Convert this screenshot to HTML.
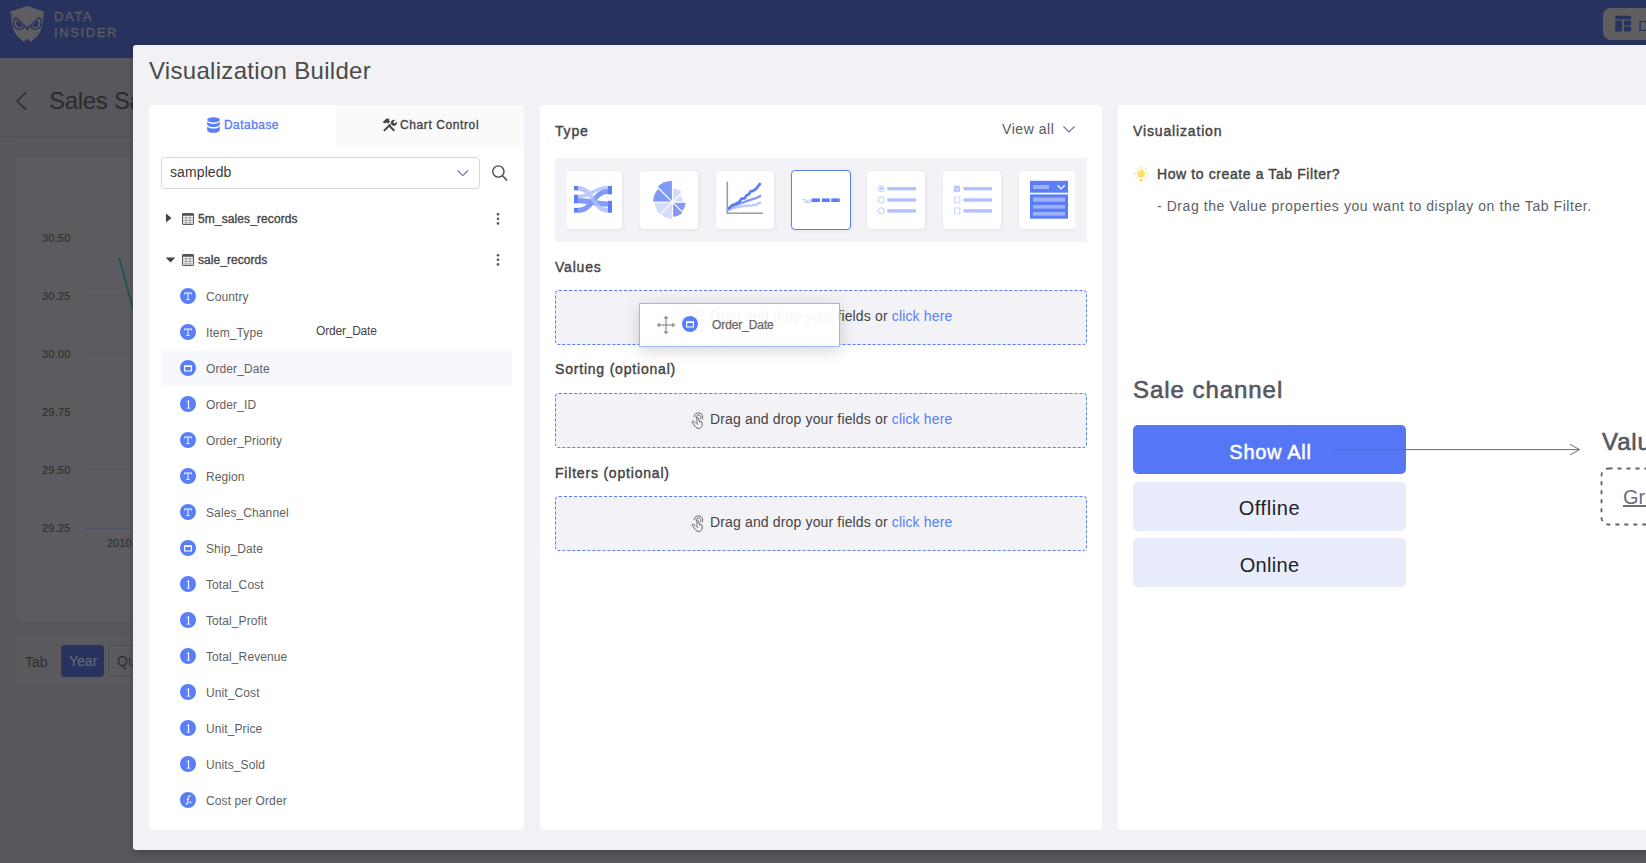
<!DOCTYPE html>
<html><head><meta charset="utf-8">
<style>
*{box-sizing:border-box;margin:0;padding:0}
html,body{width:1646px;height:863px;overflow:hidden;background:#57575c;font-family:"Liberation Sans",sans-serif;position:relative}
.a{position:absolute}
.t{position:absolute;white-space:nowrap;line-height:1}
/* background page */
#nav{left:0;top:0;width:1646px;height:58px;background:#27325e}
#hdr{left:0;top:58px;width:1646px;height:80px;background:#57575c;border-bottom:2px solid #525257}
#chart{left:17px;top:157px;width:200px;height:464px;background:#5c5c60}
#tabc{left:17px;top:637px;width:200px;height:48px;background:#5a5a5e}
/* modal */
#modal{left:133px;top:45px;width:1520px;height:805px;background:#f2f2f6;border-radius:3px;box-shadow:0 2px 6px rgba(0,0,0,.25)}
.panel{position:absolute;background:#fff;border-radius:4px}
#lp{left:149px;top:105px;width:375px;height:725px}
#mp{left:540px;top:105px;width:562px;height:725px}
#rp{left:1118px;top:105px;width:600px;height:725px}
.fld{left:206px;font-size:12px;color:#5f5f5f;letter-spacing:0.1px}
.sec{left:555px;font-size:14px;font-weight:400;color:#444;letter-spacing:0.8px;-webkit-text-stroke:0.4px #444}
.dz{left:555px;width:532px;height:55px;border:1px dashed #5a7ef6;border-radius:4px;background:#f2f2f7}
.dzt{left:710px;font-size:14px;color:#444;letter-spacing:0.15px}
.card{position:absolute;top:13px;width:58px;height:58px;background:#fff;border-radius:4px;box-shadow:1px 1px 4px rgba(0,0,40,.07)}
.card.sel{top:12px;width:60px;height:60px;border:1.5px solid #5a7ef6}
.lbl{left:42px;font-size:11px;color:#2a2a2e;letter-spacing:0.2px}
</style></head><body>
<div id="nav" class="a"></div>
<div id="hdr" class="a"></div>
<div class="a" style="left:17px;top:138px;width:200px;height:3px;background:#5a5a5e"></div>
<div id="chart" class="a"></div>
<div id="tabc" class="a"></div>

<svg class="a" style="left:5px;top:2px" width="45" height="45" viewBox="0 0 45 45"><path d="M22.4 4L39.4 9.8L38.4 11.8C38.4 22 36.5 30 31.5 35L25.5 40L22.4 36.5L19 40L13 35C8 30 6.3 22 6.3 11.8L4.4 9.8Z" fill="#5d5d62"/>
<g><path d="M8.3 17.2L10.8 14.8L20.2 23.2C19.6 26.6 17.2 27.8 14.2 27.8C10.6 27.8 8 25.2 8 21.6C8 20 8.1 18.5 8.3 17.2Z" fill="#27325e"/><path d="M9.6 18L11 16.6L18.6 23.5C18 25.6 16.3 26.4 14.2 26.4C11.5 26.4 9.4 24.3 9.4 21.6C9.4 20.3 9.5 19.1 9.6 18Z" fill="#5d5d62"/><path d="M12 18.3L17.6 23.2C17.1 24.4 16 25 14.6 25C12.7 25 11.4 23.5 11.4 21.6C11.4 20.3 11.6 19.2 12 18.3Z" fill="#27325e"/></g>
<g transform="translate(44.8 0) scale(-1 1)"><path d="M8.3 17.2L10.8 14.8L20.2 23.2C19.6 26.6 17.2 27.8 14.2 27.8C10.6 27.8 8 25.2 8 21.6C8 20 8.1 18.5 8.3 17.2Z" fill="#27325e"/><path d="M9.6 18L11 16.6L18.6 23.5C18 25.6 16.3 26.4 14.2 26.4C11.5 26.4 9.4 24.3 9.4 21.6C9.4 20.3 9.5 19.1 9.6 18Z" fill="#5d5d62"/><path d="M12 18.3L17.6 23.2C17.1 24.4 16 25 14.6 25C12.7 25 11.4 23.5 11.4 21.6C11.4 20.3 11.6 19.2 12 18.3Z" fill="#27325e"/></g><path d="M19.6 23.2L22.4 29L25.2 23.2L22.4 25.2Z" fill="#27325e"/></svg>
<div class="t" style="left:54px;top:10px;font-size:13px;color:#5d5d62;letter-spacing:1.6px;-webkit-text-stroke:0.3px #5d5d62">DATA</div>
<div class="t" style="left:54px;top:26px;font-size:13px;color:#5d5d62;letter-spacing:1.6px;-webkit-text-stroke:0.3px #5d5d62">INSIDER</div>
<div class="a" style="left:1603px;top:8px;width:80px;height:32px;background:#5e5e60;border-radius:8px"></div>
<svg class="a" style="left:1615px;top:15px" width="17" height="17" viewBox="0 0 17 17"><g fill="#27325e"><rect x="0.2" y="0.8" width="16" height="3.6" rx="1.6"/><rect x="0.2" y="5.4" width="6.9" height="11.2" rx="1.4"/><rect x="8.9" y="5.4" width="7.3" height="5" rx="1.4"/><rect x="8.9" y="11.5" width="7.3" height="5.1" rx="1.4"/></g></svg>
<div class="t" style="left:1638px;top:18px;font-size:15px;color:#27325e">D</div>
<svg class="a" style="left:14px;top:91px" width="14" height="20" viewBox="0 0 14 20"><path d="M12 1.5L3 10l9 8.5" stroke="#2a2a2e" stroke-width="1.5" fill="none"/></svg>
<div class="t" style="left:49px;top:89px;font-size:24px;color:#2a2a2e;letter-spacing:-0.3px">Sales Sales</div>
<div class="t lbl" style="top:233px">30.50</div>
<div class="t lbl" style="top:291px">30.25</div>
<div class="t lbl" style="top:349px">30.00</div>
<div class="t lbl" style="top:407px">29.75</div>
<div class="t lbl" style="top:465px">29.50</div>
<div class="t lbl" style="top:523px">29.25</div>
<div class="a" style="left:85px;top:236px;width:60px;height:1px;background:#58585c"></div>
<div class="a" style="left:85px;top:295px;width:60px;height:1px;background:#58585c"></div>
<div class="a" style="left:85px;top:353px;width:60px;height:1px;background:#58585c"></div>
<div class="a" style="left:85px;top:411px;width:60px;height:1px;background:#58585c"></div>
<div class="a" style="left:85px;top:469px;width:60px;height:1px;background:#58585c"></div>
<div class="a" style="left:85px;top:528px;width:60px;height:1px;background:#4f5368"></div>
<div class="t" style="left:107px;top:538px;font-size:11px;color:#2a2a2e">2010</div>
<svg class="a" style="left:115px;top:255px" width="20" height="55" viewBox="0 0 20 55"><path d="M4.3 3L17.5 52" stroke="#1d5456" stroke-width="1.8"/></svg>
<div class="t" style="left:25px;top:655px;font-size:14px;color:#2e2e32">Tab</div>
<div class="a" style="left:61px;top:645px;width:43px;height:32px;background:#28325f;border-radius:4px"></div>
<div class="t" style="left:69px;top:654px;font-size:14px;color:#6c6d75">Year</div>
<div class="a" style="left:108px;top:645px;width:60px;height:32px;border:1px solid #4f4f54;border-radius:4px"></div>
<div class="t" style="left:117px;top:654px;font-size:14px;color:#2e2e32">Qu</div>
<div id="modal" class="a"></div>
<div id="lp" class="panel"></div>
<div id="mp" class="panel"></div>
<div id="rp" class="panel"></div>
<div class="t" style="left:149px;top:59px;font-size:24px;color:#4a4a4a;letter-spacing:0.3px">Visualization Builder</div>

<!-- tabs -->
<div class="a" style="left:336px;top:105px;width:188px;height:40px;background:#fafafa;border-top-right-radius:4px"></div>
<svg class="a" style="left:207px;top:117px" width="13" height="16" viewBox="0 0 13 16"><g fill="#5a7ef6"><ellipse cx="6.5" cy="2.8" rx="6.3" ry="2.6"/><path d="M0.2 4.6c0.8 1.4 3.3 2.3 6.3 2.3s5.5-0.9 6.3-2.3v3.2c-0.8 1.4-3.3 2.3-6.3 2.3s-5.5-0.9-6.3-2.3z"/><path d="M0.2 9.3c0.8 1.4 3.3 2.3 6.3 2.3s5.5-0.9 6.3-2.3v3.6c0 1.6-2.8 2.9-6.3 2.9s-6.3-1.3-6.3-2.9z"/></g></svg>
<div class="t" style="left:224px;top:119px;font-size:12px;color:#5a7ef6;letter-spacing:0.45px;-webkit-text-stroke:0.35px #5a7ef6">Database</div>
<svg class="a" style="left:382px;top:118px" width="15" height="14" viewBox="0 0 15 14"><g fill="#444"><path d="M1.2 12.2l6.6-6.6l1.4 1.4l-6.6 6.6z"/><path d="M6.6 8.4l1.4-1.4l5 5l-1.4 1.4z"/><path d="M0.6 4.2l3.6-3.4c1.2-0.5 2.6-0.4 3.6 0.3l-1.2 0.8l1.6 1.6l-2.2 2.2l-1.4-1.4l-1.2 1.2z"/><path d="M9.2 6.2c-0.6-1.1-0.4-2.6 0.6-3.6c1-1 2.3-1.2 3.4-0.7l-1.9 1.9l0.4 1.2l1.2 0.4l1.9-1.9c0.5 1.1 0.3 2.5-0.7 3.4c-1 1-2.5 1.2-3.6 0.6z"/></g></svg>
<div class="t" style="left:400px;top:119px;font-size:12px;color:#444;letter-spacing:0.6px;-webkit-text-stroke:0.35px #444">Chart Control</div>
<!-- select -->
<div class="a" style="left:161px;top:157px;width:319px;height:32px;border:1px solid #d9d9d9;border-radius:4px;background:#fff"></div>
<div class="t" style="left:170px;top:165px;font-size:14px;color:#3a3a3a;letter-spacing:0.1px">sampledb</div>
<svg class="a" style="left:456px;top:168px" width="14" height="10" viewBox="0 0 14 10"><path d="M1.6 2.5L6.8 7.6L12 2.5" stroke="#6b6d96" stroke-width="1.1" fill="none"/></svg>
<svg class="a" style="left:491px;top:165px" width="18" height="17" viewBox="0 0 18 17"><circle cx="7.4" cy="6.5" r="5.6" stroke="#454a50" stroke-width="1.4" fill="none"/><path d="M11.6 10.7L16 15.4" stroke="#454a50" stroke-width="1.5"/></svg>
<!-- tree -->
<svg class="a" style="left:165px;top:213px" width="8" height="10" viewBox="0 0 8 10"><path d="M1 0.5l5.5 4.5l-5.5 4.5z" fill="#444"/></svg>
<svg class="a" style="left:182px;top:213px" width="12" height="12" viewBox="0 0 12 12"><rect x="0.5" y="0.5" width="11" height="11" rx="0.6" fill="none" stroke="#555" stroke-width="1"/><rect x="0.5" y="0.5" width="11" height="2.3" fill="#555"/><path d="M0.5 4.9h11M0.5 7.4h11M0.5 9.9h11M4.1 2.5v9M7.9 2.5v9" stroke="#888" stroke-width="0.8"/></svg>
<div class="t" style="left:198px;top:213px;font-size:12px;color:#444;letter-spacing:0.1px;-webkit-text-stroke:0.35px #444">5m_sales_records</div>
<svg class="a" style="left:495px;top:212px" width="6" height="14" viewBox="0 0 6 14"><g fill="#555"><circle cx="3" cy="2.2" r="1.3"/><circle cx="3" cy="6.8" r="1.3"/><circle cx="3" cy="11.4" r="1.3"/></g></svg>
<svg class="a" style="left:165px;top:256px" width="11" height="8" viewBox="0 0 11 8"><path d="M0.8 1.5h9.4l-4.7 5z" fill="#444"/></svg>
<svg class="a" style="left:182px;top:254px" width="12" height="12" viewBox="0 0 12 12"><rect x="0.5" y="0.5" width="11" height="11" rx="0.6" fill="none" stroke="#555" stroke-width="1"/><rect x="0.5" y="0.5" width="11" height="2.3" fill="#555"/><path d="M0.5 4.9h11M0.5 7.4h11M0.5 9.9h11M4.1 2.5v9M7.9 2.5v9" stroke="#888" stroke-width="0.8"/></svg>
<div class="t" style="left:198px;top:254px;font-size:12px;color:#444;letter-spacing:0.05px;-webkit-text-stroke:0.35px #444">sale_records</div>
<svg class="a" style="left:495px;top:253px" width="6" height="14" viewBox="0 0 6 14"><g fill="#555"><circle cx="3" cy="2.2" r="1.3"/><circle cx="3" cy="6.8" r="1.3"/><circle cx="3" cy="11.4" r="1.3"/></g></svg>
<!-- highlighted row -->
<div class="a" style="left:161px;top:351px;width:351px;height:35px;background:#f7f8fd;border-radius:3px"></div>
<div class="t" style="left:316px;top:325px;font-size:12px;color:#444;letter-spacing:-0.2px">Order_Date</div>
<svg class="a" style="left:180px;top:288px" width="16" height="16"><circle cx="8" cy="8" r="8" fill="#5a7ef6"/><path d="M4.2 4.5h7.6v2h-0.8v-1h-2.5v5.7h1.2v0.8h-3.4v-0.8h1.2v-5.7h-2.5v1h-0.8z" fill="#fff"/></svg><div class="t fld" style="top:291px">Country</div>
<svg class="a" style="left:180px;top:324px" width="16" height="16"><circle cx="8" cy="8" r="8" fill="#5a7ef6"/><path d="M4.2 4.5h7.6v2h-0.8v-1h-2.5v5.7h1.2v0.8h-3.4v-0.8h1.2v-5.7h-2.5v1h-0.8z" fill="#fff"/></svg><div class="t fld" style="top:327px">Item_Type</div>
<svg class="a" style="left:180px;top:360px" width="16" height="16"><circle cx="8" cy="8" r="8" fill="#5a7ef6"/><path d="M4 5.3h8v6.3h-8z M5.2 7.1v3.3h5.6v-3.3z" fill="#fff" fill-rule="evenodd"/></svg><div class="t fld" style="top:363px">Order_Date</div>
<svg class="a" style="left:180px;top:396px" width="16" height="16"><circle cx="8" cy="8" r="8" fill="#5a7ef6"/><path d="M6.6 5.2l1.9-0.9h0.6v7.4h1.2v0.8h-3.6v-0.8h1.2v-6.1l-1.3 0.4z" fill="#fff"/></svg><div class="t fld" style="top:399px">Order_ID</div>
<svg class="a" style="left:180px;top:432px" width="16" height="16"><circle cx="8" cy="8" r="8" fill="#5a7ef6"/><path d="M4.2 4.5h7.6v2h-0.8v-1h-2.5v5.7h1.2v0.8h-3.4v-0.8h1.2v-5.7h-2.5v1h-0.8z" fill="#fff"/></svg><div class="t fld" style="top:435px">Order_Priority</div>
<svg class="a" style="left:180px;top:468px" width="16" height="16"><circle cx="8" cy="8" r="8" fill="#5a7ef6"/><path d="M4.2 4.5h7.6v2h-0.8v-1h-2.5v5.7h1.2v0.8h-3.4v-0.8h1.2v-5.7h-2.5v1h-0.8z" fill="#fff"/></svg><div class="t fld" style="top:471px">Region</div>
<svg class="a" style="left:180px;top:504px" width="16" height="16"><circle cx="8" cy="8" r="8" fill="#5a7ef6"/><path d="M4.2 4.5h7.6v2h-0.8v-1h-2.5v5.7h1.2v0.8h-3.4v-0.8h1.2v-5.7h-2.5v1h-0.8z" fill="#fff"/></svg><div class="t fld" style="top:507px">Sales_Channel</div>
<svg class="a" style="left:180px;top:540px" width="16" height="16"><circle cx="8" cy="8" r="8" fill="#5a7ef6"/><path d="M4 5.3h8v6.3h-8z M5.2 7.1v3.3h5.6v-3.3z" fill="#fff" fill-rule="evenodd"/></svg><div class="t fld" style="top:543px">Ship_Date</div>
<svg class="a" style="left:180px;top:576px" width="16" height="16"><circle cx="8" cy="8" r="8" fill="#5a7ef6"/><path d="M6.6 5.2l1.9-0.9h0.6v7.4h1.2v0.8h-3.6v-0.8h1.2v-6.1l-1.3 0.4z" fill="#fff"/></svg><div class="t fld" style="top:579px">Total_Cost</div>
<svg class="a" style="left:180px;top:612px" width="16" height="16"><circle cx="8" cy="8" r="8" fill="#5a7ef6"/><path d="M6.6 5.2l1.9-0.9h0.6v7.4h1.2v0.8h-3.6v-0.8h1.2v-6.1l-1.3 0.4z" fill="#fff"/></svg><div class="t fld" style="top:615px">Total_Profit</div>
<svg class="a" style="left:180px;top:648px" width="16" height="16"><circle cx="8" cy="8" r="8" fill="#5a7ef6"/><path d="M6.6 5.2l1.9-0.9h0.6v7.4h1.2v0.8h-3.6v-0.8h1.2v-6.1l-1.3 0.4z" fill="#fff"/></svg><div class="t fld" style="top:651px">Total_Revenue</div>
<svg class="a" style="left:180px;top:684px" width="16" height="16"><circle cx="8" cy="8" r="8" fill="#5a7ef6"/><path d="M6.6 5.2l1.9-0.9h0.6v7.4h1.2v0.8h-3.6v-0.8h1.2v-6.1l-1.3 0.4z" fill="#fff"/></svg><div class="t fld" style="top:687px">Unit_Cost</div>
<svg class="a" style="left:180px;top:720px" width="16" height="16"><circle cx="8" cy="8" r="8" fill="#5a7ef6"/><path d="M6.6 5.2l1.9-0.9h0.6v7.4h1.2v0.8h-3.6v-0.8h1.2v-6.1l-1.3 0.4z" fill="#fff"/></svg><div class="t fld" style="top:723px">Unit_Price</div>
<svg class="a" style="left:180px;top:756px" width="16" height="16"><circle cx="8" cy="8" r="8" fill="#5a7ef6"/><path d="M6.6 5.2l1.9-0.9h0.6v7.4h1.2v0.8h-3.6v-0.8h1.2v-6.1l-1.3 0.4z" fill="#fff"/></svg><div class="t fld" style="top:759px">Units_Sold</div>
<svg class="a" style="left:180px;top:792px" width="16" height="16"><circle cx="8" cy="8" r="8" fill="#5a7ef6"/><path d="M10.6 4.4c-0.3-0.5-1-0.6-1.5-0.3c-0.6 0.4-0.8 1.2-0.9 2l-0.5 4.5c-0.1 0.7-0.4 1.2-1 1.3c-0.4 0-0.7-0.2-0.9-0.4" stroke="#fff" stroke-width="1.1" fill="none"/><path d="M6.6 7.3h2.6" stroke="#fff" stroke-width="0.8"/><path d="M9.6 9.6h1.6v1.6h-1.6z" fill="#fff"/></svg><div class="t fld" style="top:795px">Cost per Order</div>


<div class="t sec" style="top:124px">Type</div>
<div class="t" style="left:1002px;top:122px;font-size:14px;color:#555a60;letter-spacing:0.55px">View all</div>
<svg class="a" style="left:1062px;top:125px" width="14" height="9" viewBox="0 0 14 9"><path d="M1.5 1.5l5.5 5.5l5.5-5.5" stroke="#6e6f96" stroke-width="1.1" fill="none"/></svg>
<div class="a" style="left:555px;top:158px;width:532px;height:84px;background:#f2f2f7"></div>
<div class="a" style="left:567px;top:158px;width:508px;height:84px;overflow:hidden">
 <div class="card" style="left:-8px;width:63px"></div>
 <div class="card" style="left:73px"></div>
 <div class="card" style="left:149px"></div>
 <div class="card sel" style="left:224px"></div>
 <div class="card" style="left:300px"></div>
 <div class="card" style="left:376px"></div>
 <div class="card" style="left:452px;width:66px"></div>
</div>
<svg class="a" style="left:574px;top:186px" width="38" height="27" viewBox="0 0 38 27">
<path d="M4 2.2C19 2.2 19 24.4 34 24.4" stroke="#bcc8fb" stroke-width="4.4" fill="none"/>
<path d="M4 10.4C19 10.4 19 1.6 34 1.6" stroke="#bcc8fb" stroke-width="3.4" fill="none"/>
<path d="M4 14.6C19 14.6 19 18.1 34 18.1" stroke="#8199f7" stroke-width="5.3" fill="none"/>
<path d="M4 24.3C19 24.3 19 5.6 34 5.6" stroke="#8199f7" stroke-width="5" fill="none"/>
<path d="M4 2.2C19 2.2 19 24.4 34 24.4" stroke="#bcc8fb" stroke-width="4.4" fill="none" opacity="0.6"/>
<rect x="0" y="0" width="4" height="4.4" fill="#5a7ef6"/><rect x="0" y="8.7" width="4" height="8.6" fill="#5a7ef6"/><rect x="0" y="21.9" width="4" height="4.8" fill="#5a7ef6"/>
<rect x="34" y="0" width="4" height="8.3" fill="#5a7ef6"/><rect x="34" y="14.8" width="4" height="11.9" fill="#5a7ef6"/>
</svg>
<svg class="a" style="left:650px;top:180px" width="46" height="42" viewBox="0 0 46 42"><path d="M22.50 22.20L22.50 8.40A13.8 13.8 0 0 1 32.26 12.44Z" fill="#d2dcfd"/><path d="M22.50 22.20L29.85 14.85A10.4 10.4 0 0 1 32.90 22.20Z" fill="#d2dcfd"/><path d="M22.50 22.20L35.50 22.20A13 13 0 0 1 31.69 31.39Z" fill="#8199f7"/><path d="M22.50 22.20L32.82 32.52A14.6 14.6 0 0 1 22.50 36.80Z" fill="#8199f7"/><path d="M22.50 22.20L22.50 38.80A16.6 16.6 0 0 1 10.76 33.94Z" fill="#d2dcfd"/><path d="M22.50 22.20L10.05 34.65A17.6 17.6 0 0 1 4.90 22.20Z" fill="#d2dcfd"/><path d="M22.50 22.20L3.00 22.20A19.5 19.5 0 0 1 8.71 8.41Z" fill="#8199f7"/><path d="M22.50 22.20L7.37 7.07A21.4 21.4 0 0 1 22.50 0.80Z" fill="#8199f7"/><path d="M22.50 22.20L47.50 22.20" stroke="#fff" stroke-width="1.2"/><path d="M22.50 22.20L40.18 39.88" stroke="#fff" stroke-width="1.2"/><path d="M22.50 22.20L22.50 47.20" stroke="#fff" stroke-width="1.2"/><path d="M22.50 22.20L4.82 39.88" stroke="#fff" stroke-width="1.2"/><path d="M22.50 22.20L-2.50 22.20" stroke="#fff" stroke-width="1.2"/><path d="M22.50 22.20L4.82 4.52" stroke="#fff" stroke-width="1.2"/><path d="M22.50 22.20L22.50 -2.80" stroke="#fff" stroke-width="1.2"/><path d="M22.50 22.20L40.18 4.52" stroke="#fff" stroke-width="1.2"/></svg>
<svg class="a" style="left:722px;top:178px" width="46" height="40" viewBox="0 0 46 40">
<path d="M5.3 3.7V35.2H41" stroke="#9a9db2" stroke-width="1.6" fill="none"/>
<path d="M6 32.5L10 30.3L15 29.3L22 27.9L30 27.3L35 26.3L39 24" stroke="#bcc8fb" stroke-width="2.3" fill="none" stroke-linejoin="round"/>
<path d="M6 32L10 28.3L17 25.8L24 23.3L30 21.3L35 19.8L39 17.6" stroke="#8199f7" stroke-width="2.3" fill="none" stroke-linejoin="round"/>
<path d="M6.3 31L10 27.3L13 26.3L17.5 23.8L19.5 20.6L22.5 20.4L24.5 17.4L27 16L28.5 13.5L31 12.9L34 10.8L38.6 5.2" stroke="#5a7ef6" stroke-width="2.7" fill="none" stroke-linejoin="round"/>
</svg>
<svg class="a" style="left:800px;top:194px" width="42" height="12" viewBox="0 0 42 12">
<text x="2" y="9.3" font-family="Liberation Sans" font-size="6" fill="#a9b8fa">Tab</text>
<rect x="11.5" y="4.4" width="8.4" height="3.6" fill="#5a7ef6"/><rect x="21.8" y="4.4" width="8" height="3.6" fill="#5a7ef6"/><rect x="31.2" y="4.4" width="8.5" height="3.6" fill="#5a7ef6"/>
</svg>
<svg class="a" style="left:872px;top:180px" width="50" height="40" viewBox="0 0 50 40">
<g fill="none" stroke="#b4c2fb" stroke-width="0.9"><circle cx="9.3" cy="8.6" r="3"/><circle cx="9.3" cy="19.9" r="3"/><circle cx="9.3" cy="30.8" r="3"/></g><circle cx="9.3" cy="8.6" r="1.5" fill="#b4c2fb"/>
<rect x="15.3" y="7" width="28.7" height="3.4" fill="#b4c2fb"/><rect x="15.3" y="18.3" width="28.7" height="3.4" fill="#b4c2fb"/><rect x="15.3" y="29.2" width="28.7" height="3.4" fill="#b4c2fb"/>
</svg>
<svg class="a" style="left:948px;top:180px" width="50" height="40" viewBox="0 0 50 40">
<rect x="6" y="5.8" width="6" height="6" fill="#b4c2fb"/><path d="M7.3 8.7l1.5 1.5l2.4-2.6" stroke="#fff" stroke-width="0.9" fill="none"/>
<g fill="none" stroke="#b4c2fb" stroke-width="0.8" opacity="0.8"><rect x="6.4" y="17" width="5.4" height="5.8"/><rect x="6.4" y="28" width="5.4" height="5.8"/></g>
<rect x="15.5" y="7" width="28.5" height="3.4" fill="#b4c2fb"/><rect x="15.5" y="18.3" width="28.5" height="3.4" fill="#b4c2fb"/><rect x="15.5" y="29.2" width="28.5" height="3.4" fill="#b4c2fb"/>
</svg>
<svg class="a" style="left:1030px;top:180px" width="38" height="40" viewBox="0 0 38 40">
<rect x="0" y="0.8" width="38" height="11.9" fill="#5a7ef6"/><rect x="3" y="5" width="16" height="4" fill="#9fb1fa"/><path d="M27.5 5.3l3.6 3.6l3.6-3.6" stroke="#fff" stroke-width="1.3" fill="none"/>
<rect x="0" y="14.4" width="38" height="24.3" fill="#5a7ef6"/><rect x="3" y="17.5" width="32" height="4.2" fill="#9fb1fa"/><rect x="3" y="25" width="32" height="3.6" fill="#9fb1fa"/><rect x="3" y="32" width="32" height="3.7" fill="#9fb1fa"/>
</svg>
<div class="t sec" style="top:260px">Values</div>
<div class="a dz" style="top:290px"></div>
<svg class="a" style="left:691px;top:309px" width="15" height="18" viewBox="0 0 15 18"><g fill="none" stroke="#555" stroke-width="0.9" stroke-linecap="round"><path d="M3.2 4.5c0.2-2.2 2-3.6 4.2-3.6c2.4 0 4.3 1.9 4.3 4.3c0 0.8-0.2 1.4-0.6 2"/><path d="M5 5c0.2-1.1 1.2-2 2.4-2c1.3 0 2.4 1.1 2.4 2.4c0 0.4-0.1 0.7-0.2 1"/><path d="M6.3 8.8l-0.8-2.4c-0.2-0.6 0.1-1.1 0.6-1.2c0.5-0.1 0.9 0.2 1.1 0.7l1.6 4.1"/><path d="M4.2 10.8l-1.6-1.4c-0.5-0.4-1.1-0.4-1.4 0c-0.3 0.4-0.2 0.9 0.2 1.3l2.8 3.6c0.9 1.4 2.3 2.3 4 2.1c2-0.3 3.3-2.2 3-4.2l-0.5-2.2c-0.1-0.5-0.6-0.8-1.1-0.7"/><path d="M5.4 9.8l1.2 2.6"/></g></svg>
<div class="t dzt" style="top:309px">Drag and drop your fields or <span style="color:#5a7ef6">click here</span></div>
<div class="t sec" style="top:362px">Sorting (optional)</div>
<div class="a dz" style="top:393px"></div>
<svg class="a" style="left:691px;top:412px" width="15" height="18" viewBox="0 0 15 18"><g fill="none" stroke="#555" stroke-width="0.9" stroke-linecap="round"><path d="M3.2 4.5c0.2-2.2 2-3.6 4.2-3.6c2.4 0 4.3 1.9 4.3 4.3c0 0.8-0.2 1.4-0.6 2"/><path d="M5 5c0.2-1.1 1.2-2 2.4-2c1.3 0 2.4 1.1 2.4 2.4c0 0.4-0.1 0.7-0.2 1"/><path d="M6.3 8.8l-0.8-2.4c-0.2-0.6 0.1-1.1 0.6-1.2c0.5-0.1 0.9 0.2 1.1 0.7l1.6 4.1"/><path d="M4.2 10.8l-1.6-1.4c-0.5-0.4-1.1-0.4-1.4 0c-0.3 0.4-0.2 0.9 0.2 1.3l2.8 3.6c0.9 1.4 2.3 2.3 4 2.1c2-0.3 3.3-2.2 3-4.2l-0.5-2.2c-0.1-0.5-0.6-0.8-1.1-0.7"/><path d="M5.4 9.8l1.2 2.6"/></g></svg>
<div class="t dzt" style="top:412px">Drag and drop your fields or <span style="color:#5a7ef6">click here</span></div>
<div class="t sec" style="top:466px">Filters (optional)</div>
<div class="a dz" style="top:496px"></div>
<svg class="a" style="left:691px;top:515px" width="15" height="18" viewBox="0 0 15 18"><g fill="none" stroke="#555" stroke-width="0.9" stroke-linecap="round"><path d="M3.2 4.5c0.2-2.2 2-3.6 4.2-3.6c2.4 0 4.3 1.9 4.3 4.3c0 0.8-0.2 1.4-0.6 2"/><path d="M5 5c0.2-1.1 1.2-2 2.4-2c1.3 0 2.4 1.1 2.4 2.4c0 0.4-0.1 0.7-0.2 1"/><path d="M6.3 8.8l-0.8-2.4c-0.2-0.6 0.1-1.1 0.6-1.2c0.5-0.1 0.9 0.2 1.1 0.7l1.6 4.1"/><path d="M4.2 10.8l-1.6-1.4c-0.5-0.4-1.1-0.4-1.4 0c-0.3 0.4-0.2 0.9 0.2 1.3l2.8 3.6c0.9 1.4 2.3 2.3 4 2.1c2-0.3 3.3-2.2 3-4.2l-0.5-2.2c-0.1-0.5-0.6-0.8-1.1-0.7"/><path d="M5.4 9.8l1.2 2.6"/></g></svg>
<div class="t dzt" style="top:515px">Drag and drop your fields or <span style="color:#5a7ef6">click here</span></div>

<div class="a" style="left:639px;top:303px;width:201px;height:44px;background:rgba(255,255,255,0.94);border:1px solid #a3b5fa;box-shadow:0 4px 16px rgba(0,0,0,0.17)"></div>
<svg class="a" style="left:656px;top:315px" width="20" height="20" viewBox="0 0 20 20"><g fill="#8a8a8a"><path d="M9.4 2.5h1.2v15h-1.2z"/><path d="M2.5 9.4h15v1.2h-15z"/><path d="M10 0.8l2.6 2.8h-5.2z"/><path d="M10 19.2l2.6-2.8h-5.2z"/><path d="M0.8 10l2.8 2.6v-5.2z"/><path d="M19.2 10l-2.8 2.6v-5.2z"/></g></svg>
<svg class="a" style="left:682px;top:316px" width="16" height="16"><circle cx="8" cy="8" r="8" fill="#5a7ef6"/><path d="M4 5.3h8v6.3h-8z M5.2 7.1v3.3h5.6v-3.3z" fill="#fff" fill-rule="evenodd"/></svg>
<div class="t" style="left:712px;top:319px;font-size:12px;color:#666;letter-spacing:-0.1px;-webkit-text-stroke:0.25px #666">Order_Date</div>

<div class="t" style="left:1133px;top:124px;font-size:14px;color:#444;letter-spacing:0.85px;-webkit-text-stroke:0.4px #444">Visualization</div>
<svg class="a" style="left:1132px;top:164px" width="18" height="20" viewBox="0 0 18 20"><g stroke="#fde36a" stroke-width="1.1" stroke-linecap="round"><path d="M9 2.6v0.9"/><path d="M3.8 4.6l0.8 0.8"/><path d="M14.2 4.6l-0.8 0.8"/><path d="M1.8 9.6h1.2"/><path d="M16.2 9.6h-1.2"/><path d="M3.8 14.2l0.8-0.8"/><path d="M14.2 14.2l-0.8-0.8"/></g><path d="M9 5.6c-2.3 0-4 1.7-4 3.9c0 1.4 0.7 2.4 1.5 3.2c0.4 0.4 0.7 0.9 0.7 1.4h3.6c0-0.5 0.3-1 0.7-1.4c0.8-0.8 1.5-1.8 1.5-3.2c0-2.2-1.7-3.9-4-3.9z" fill="#fde166"/><path d="M7.2 14.9h3.6v0.9c0 0.7-0.5 1.3-1.2 1.3h-1.2c-0.7 0-1.2-0.6-1.2-1.3z" fill="#fcdc4c"/><path d="M6.5 9.2c0.2-1.2 0.9-1.9 2-2.1" stroke="#fff" stroke-width="0.7" fill="none" opacity="0.7"/></svg>
<div class="t" style="left:1157px;top:167px;font-size:14px;color:#444;letter-spacing:0.6px;-webkit-text-stroke:0.4px #444">How to create a Tab Filter?</div>
<div class="t" style="left:1157px;top:199px;font-size:14px;color:#5c5f66;letter-spacing:0.57px">- Drag the Value properties you want to display on the Tab Filter.</div>
<div class="t" style="left:1133px;top:378px;font-size:24px;color:#55585e;letter-spacing:0.95px;-webkit-text-stroke:0.6px #55585e">Sale channel</div>
<div class="a" style="left:1133px;top:425px;width:273px;height:49px;background:#5577f6;border-radius:5px"></div>
<div class="t" style="left:1134px;top:442px;width:273px;text-align:center;font-size:20px;color:#fff;letter-spacing:0.7px;-webkit-text-stroke:0.5px #fff">Show All</div>
<div class="a" style="left:1133px;top:482px;width:273px;height:49px;background:#e9ecfc;border-radius:5px"></div>
<div class="t" style="left:1133px;top:498px;width:273px;text-align:center;font-size:20px;color:#1e1f24;letter-spacing:0.6px">Offline</div>
<div class="a" style="left:1133px;top:538px;width:273px;height:49px;background:#e9ecfc;border-radius:5px"></div>
<div class="t" style="left:1133px;top:555px;width:273px;text-align:center;font-size:20px;color:#1e1f24;letter-spacing:0.3px">Online</div>
<svg class="a" style="left:1333px;top:440px" width="250" height="20" viewBox="0 0 250 20"><path d="M1 9.6h245" stroke="#6b6e74" stroke-width="1"/><path d="M237 4.3l9.5 5.3l-9.5 5.3" stroke="#6b6e74" stroke-width="1" fill="none"/></svg>
<div class="t" style="left:1602px;top:430px;font-size:24px;color:#55585e;letter-spacing:0.9px;-webkit-text-stroke:0.6px #55585e">Value</div>
<svg class="a" style="left:1600px;top:467px" width="60" height="60" viewBox="0 0 60 60"><rect x="1.5" y="1.5" width="100" height="56" rx="7" fill="none" stroke="#5f6268" stroke-width="1.8" stroke-dasharray="4 5"/></svg>
<div class="t" style="left:1623px;top:487px;font-size:20px;color:#6b6e74;text-decoration:underline">Group</div>
</body></html>
